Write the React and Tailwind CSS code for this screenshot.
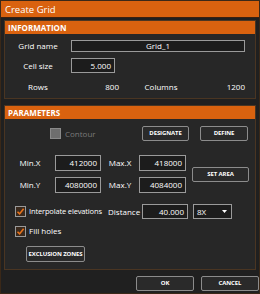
import React from "react";

const font = { fontFamily: '"Open Sans", "Noto Sans", sans-serif' };

function Btn({ children, className = "" }) {
  return (
    <div
      className={
        "flex items-center justify-center border border-[#8c8c8c] rounded-[2px] bg-[#2a2a2a] text-white font-bold text-[6px] tracking-[-0.1px] whitespace-nowrap " +
        className
      }
    >
      {children}
    </div>
  );
}

function Input({ children, className = "" }) {
  return (
    <div
      className={
        "flex items-center justify-end border border-[#9a9a9a] bg-[#1c1c1c] text-white text-[8px] pr-[3px] " +
        className
      }
    >
      {children}
    </div>
  );
}

function Check() {
  return (
    <div className="w-[11px] h-[11px] shrink-0 border border-[#9a9a9a] bg-[#3a2a1e] flex items-center justify-center">
      <svg width="9" height="9" viewBox="0 0 9 9">
        <path d="M1.5 4.8 L3.6 6.9 L7.6 1.8" fill="none" stroke="#e8731c" strokeWidth="1.6" />
      </svg>
    </div>
  );
}

function Header({ children }) {
  return (
    <div className="h-[13px] bg-[#d9620f] text-white font-bold text-[8px] leading-[13px] pl-[3px]">
      {children}
    </div>
  );
}

export default function App() {
  return (
    <div
      style={font}
      className="w-[260px] h-[294px] bg-[#202020] border border-[#3a2818] flex flex-col overflow-hidden"
    >
      <div className="h-[17px] bg-[#d9620f] text-white text-[9.5px] leading-[17px] pl-[4px] border-b border-[#3a2010]">
        Create Grid
      </div>
      <div className="flex-1 flex flex-col px-[3px] pt-[2px]">
        {/* INFORMATION */}
        <div className="border border-[#4a3522] bg-[#272727] h-[79px] flex flex-col">
          <Header>INFORMATION</Header>
          <div className="flex items-center mt-[6px] h-[12px]">
            <div className="w-[66px] text-center text-[8px] text-white">Grid name</div>
            <div className="w-[174px] h-[12px] border border-[#9a9a9a] bg-[#1c1c1c] text-white text-[8px] flex items-center justify-center">
              Grid_1
            </div>
          </div>
          <div className="flex items-center mt-[6px] h-[15px]">
            <div className="w-[66px] text-center text-[8px] text-white">Cell size</div>
            <Input className="w-[44px] h-[15px]">5.000</Input>
          </div>
          <div className="flex items-center mt-[8px] h-[12px] text-[8px] text-white">
            <div className="w-[66px] text-center">Rows</div>
            <div className="w-[48px] text-right">800</div>
            <div className="w-[84px] text-center">Columns</div>
            <div className="w-[42px] text-right">1200</div>
          </div>
        </div>

        {/* PARAMETERS */}
        <div className="mt-[6px] border border-[#4a3522] bg-[#272727] h-[165px] flex flex-col">
          <Header>PARAMETERS</Header>
          <div className="flex items-center mt-[7px] h-[15px]">
            <div className="w-[45px]" />
            <div className="w-[11px] h-[11px] bg-[#6e6e6e] border border-[#8a8a8a]" />
            <div className="ml-[4px] text-[8px] text-[#7a7a7a] w-[77px]">Contour</div>
            <Btn className="w-[47px] h-[15px]">DESIGNATE</Btn>
            <Btn className="ml-[11px] w-[48px] h-[15px]">DEFINE</Btn>
          </div>
          <div className="flex items-center mt-[14px]">
            <div className="flex flex-col">
              <div className="flex items-center h-[16px]">
                <div className="w-[50px] text-center text-[8px] text-white">Min.X</div>
                <Input className="w-[46px] h-[16px]">412000</Input>
                <div className="w-[38px] text-center text-[8px] text-white">Max.X</div>
                <Input className="w-[47px] h-[16px]">418000</Input>
              </div>
              <div className="flex items-center h-[16px] mt-[6px]">
                <div className="w-[50px] text-center text-[8px] text-white">Min.Y</div>
                <Input className="w-[46px] h-[16px]">4080000</Input>
                <div className="w-[38px] text-center text-[8px] text-white">Max.Y</div>
                <Input className="w-[47px] h-[16px]">4084000</Input>
              </div>
            </div>
            <Btn className="ml-[6px] w-[57px] h-[15px]">SET AREA</Btn>
          </div>
          <div className="flex items-center mt-[11px] h-[15px] text-[8px] text-white">
            <div className="w-[10px] shrink-0" />
            <Check />
            <div className="ml-[3px] w-[79px] shrink-0 whitespace-nowrap text-[7.5px] tracking-[-0.15px]">
              Interpolate elevations
            </div>
            <div className="w-[34px] shrink-0 whitespace-nowrap">Distance</div>
            <Input className="w-[46px] h-[15px] shrink-0">40.000</Input>
            <div className="ml-[5px] w-[39px] h-[15px] shrink-0 border border-[#9a9a9a] bg-[#1c1c1c] flex items-center justify-between pl-[3px] pr-[4px]">
              <span>8X</span>
              <svg width="5" height="3" viewBox="0 0 5 3">
                <path d="M0 0 L5 0 L2.5 3 Z" fill="#ffffff" />
              </svg>
            </div>
          </div>
          <div className="flex items-center mt-[6px] h-[12px] text-[8px] text-white">
            <div className="w-[10px]" />
            <Check />
            <div className="ml-[3px]">Fill holes</div>
          </div>
          <div className="flex items-center mt-[9px]">
            <div className="w-[21px]" />
            <Btn className="w-[59px] h-[16px]">EXCLUSION ZONES</Btn>
          </div>
        </div>

        {/* Footer */}
        <div className="flex justify-end mt-[6px]">
          <Btn className="w-[58px] h-[15px]">OK</Btn>
          <Btn className="ml-[7px] w-[58px] h-[15px] mr-[-3px]">CANCEL</Btn>
        </div>
      </div>
    </div>
  );
}
